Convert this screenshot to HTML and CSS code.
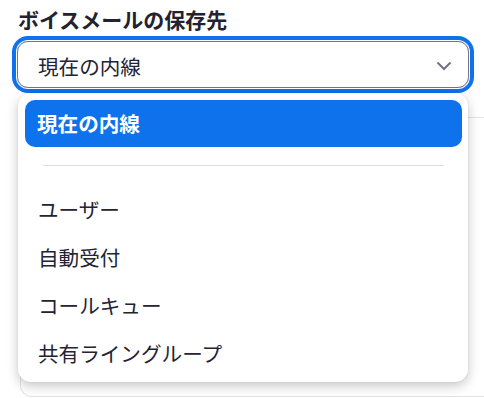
FILE: index.html
```html
<!DOCTYPE html>
<html lang="ja">
<head>
    <meta charset="UTF-8">
    <title>ボイスメールの保存先</title>
    <link rel="stylesheet" href="styles.css">
</head>
<body>
<main class="field">
    <label class="field-label">ボイスメールの保存先</label>
    <div class="select">
        <span class="select-value">現在の内線</span>
        <svg class="chevron" width="16" height="10" viewBox="0 0 16 10">
            <path d="M1.5 1.5 L8 8 L14.5 1.5" fill="none" stroke="#6e7480" stroke-width="2"/>
        </svg>
    </div>
    <div class="card"></div>

    <ul class="menu">
        <li class="menu-item active">現在の内線</li>
        <li class="divider"></li>
        <li class="menu-item">ユーザー</li>
        <li class="menu-item">自動受付</li>
        <li class="menu-item">コールキュー</li>
        <li class="menu-item">共有ライングループ</li>
    </ul>
</main>
</body>
</html>
```

FILE: styles.css
```css
* {
    padding: 0;
    margin: 0;
    box-sizing: border-box;
    font-family: "Noto Sans CJK JP", "Noto Sans", sans-serif;
}

body {
    background: #ffffff;
    color: #232333;
    overflow: hidden;
}

.field {
    position: relative;
    padding: 5px 0 0 17px;
}

.field-label {
    display: block;
    font-size: 21px;
    font-weight: 700;
    line-height: 29px;
    padding-left: 1px;
    color: #222230;
}

.select {
    display: flex;
    align-items: center;
    justify-content: space-between;
    width: 452px;
    height: 47px;
    margin-top: 7px;
    padding: 0 16px 0 20px;
    border: 1px solid #747487;
    border-radius: 11px;
    box-shadow: 0 0 0 1px #ffffff, 0 0 0 5px #0e72ed;
}

.select-value {
    font-size: 20.6px;
    line-height: 28px;
    padding-top: 2px;
}

.chevron {
    margin-top: 3px;
}

.card {
    width: 464px;
    height: 280px;
    margin-top: 29px;
    margin-left: 3px;
    border: 1px solid #e3e3e8;
    border-right: none;
    border-radius: 12px 0 0 12px;
}

.menu {
    position: absolute;
    left: 18px;
    top: 93px;
    width: 450px;
    padding: 7px 6px 4px 7px;
    list-style: none;
    background: #ffffff;
    border-radius: 13px;
    box-shadow: 0 4px 12px rgba(0, 0, 0, 0.22), 0 0 2px rgba(0, 0, 0, 0.08);
}

.menu-item {
    height: 48px;
    line-height: 46px;
    padding-left: 13px;
    font-size: 20.6px;
    color: #232333;
}

.menu-item.active {
    height: 47px;
    line-height: 47px;
    padding-left: 12px;
    background: #0e72ed;
    color: #ffffff;
    font-weight: 700;
    border-radius: 10px;
}

.divider {
    height: 1px;
    margin: 18px 18px 20px 18px;
    background: #e0e0e4;
}
```
